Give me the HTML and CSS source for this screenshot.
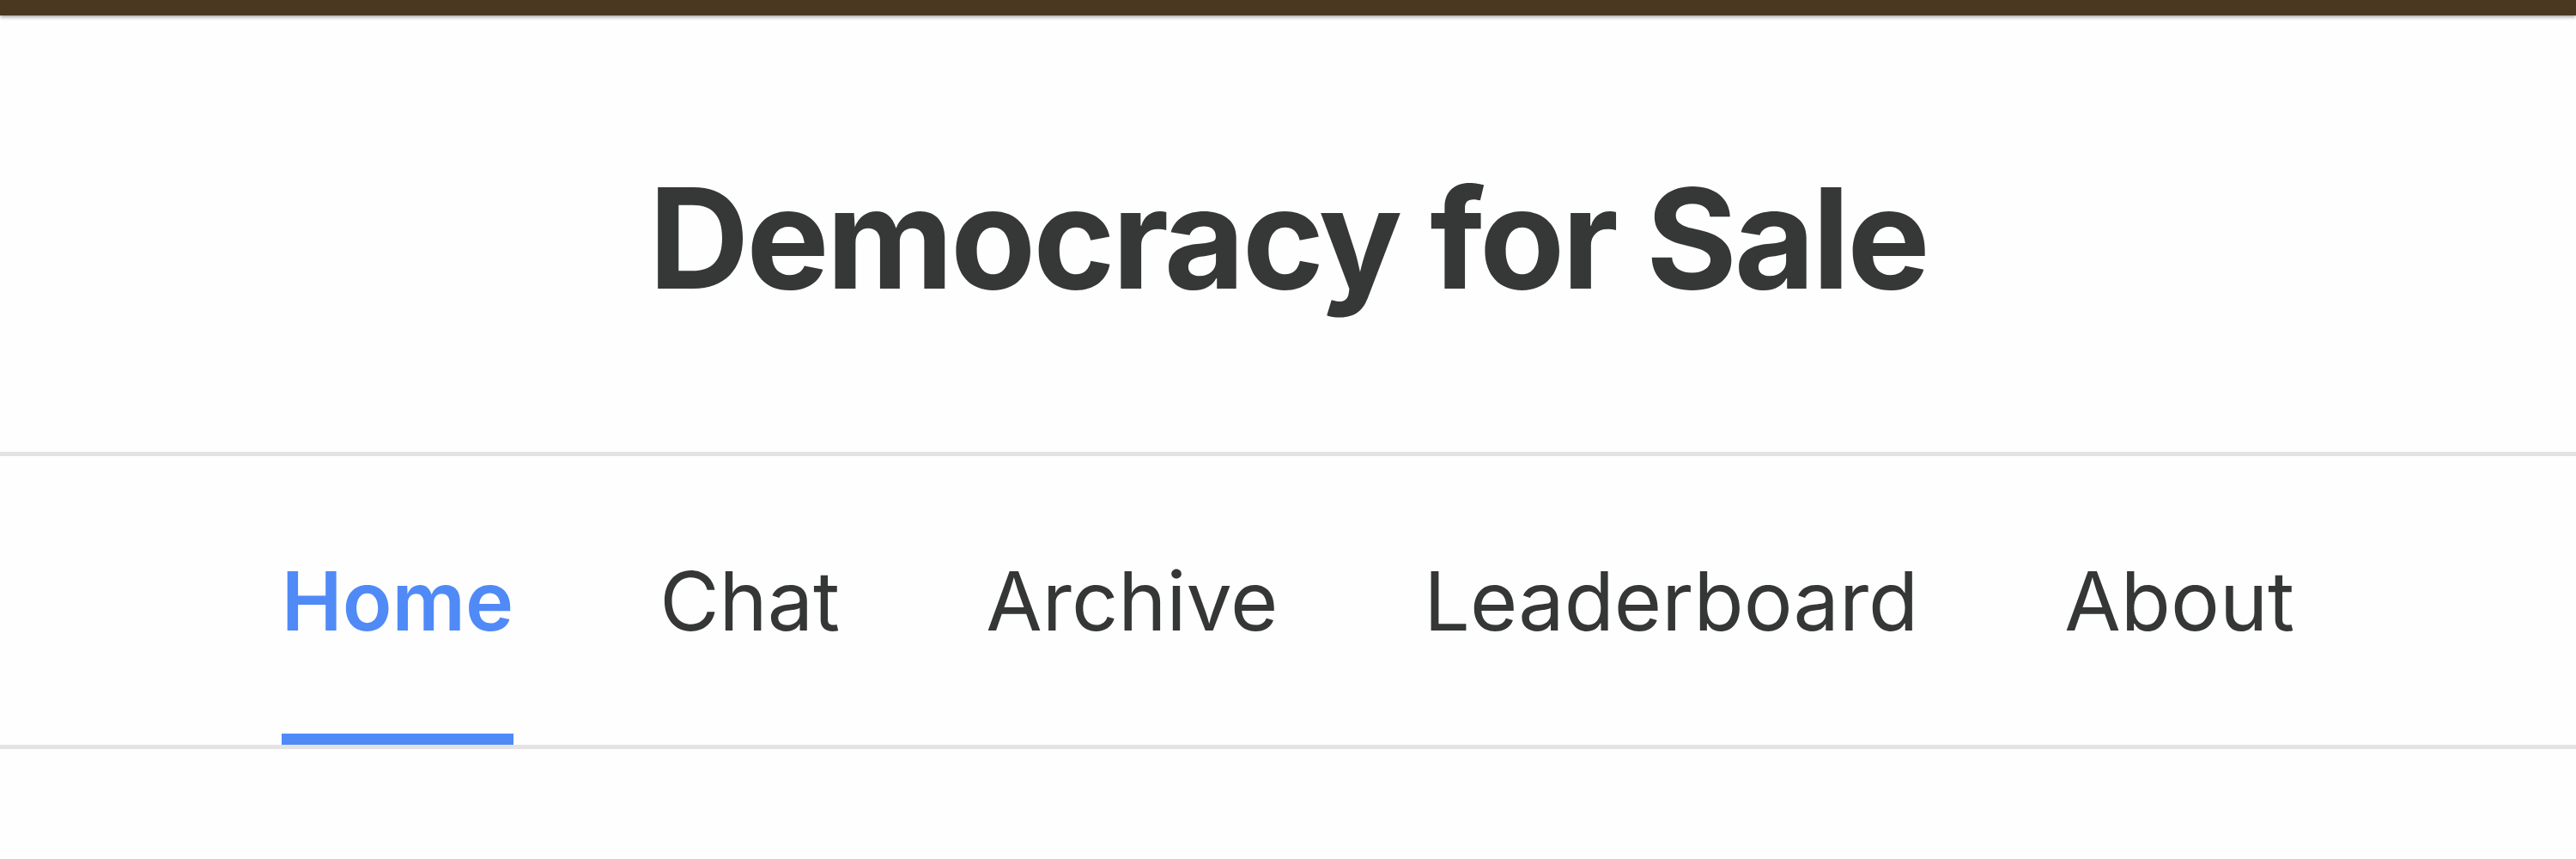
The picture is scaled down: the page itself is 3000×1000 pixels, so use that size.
FILE: index.html
```html
<!DOCTYPE html>
<html lang="en">

<head>
    <meta charset="UTF-8">
    <meta name="viewport" content="width=device-width, initial-scale=1.0">
    <title>Democracy for Sale</title>
    <link rel="stylesheet" href="styles.css">
</head>

<body>
    <div class="top-bar"></div>
    <header class="site-header">
        <h1 class="site-title">Democracy for Sale</h1>
    </header>
    <nav class="main-nav">
        <a href="#" class="nav-link active">Home</a>
        <a href="#" class="nav-link">Chat</a>
        <a href="#" class="nav-link">Archive</a>
        <a href="#" class="nav-link">Leaderboard</a>
        <a href="#" class="nav-link">About</a>
    </nav>
</body>

</html>
```

FILE: styles.css
```css
body {
    margin: 0;
    background-color: #fefefe;
    font-family: Inter, "Liberation Sans", sans-serif;
    color: #353636;
}

.top-bar {
    height: 18px;
    background-color: #4a3820;
    box-shadow: 0 2px 4px rgba(0, 0, 0, 0.35);
}

.site-header {
    text-align: center;
}

.site-title {
    margin: 0;
    padding: 178px 0 168px;
    font-size: 162px;
    line-height: 1;
    font-weight: 700;
    letter-spacing: -0.02em;
    color: #363838;
}

.main-nav {
    display: flex;
    justify-content: center;
    gap: 170px;
    padding-top: 121px;
    border-top: 5px solid #e3e3e3;
    border-bottom: 5px solid #e3e3e3;
}

.nav-link {
    display: block;
    padding-bottom: 107px;
    border-bottom: 13px solid transparent;
    font-size: 95px;
    line-height: 1;
    font-weight: 400;
    color: #353636;
    text-decoration: none;
}

.nav-link.active {
    color: #4f8af7;
    font-weight: 600;
    border-bottom-color: #4f8af7;
}
```
